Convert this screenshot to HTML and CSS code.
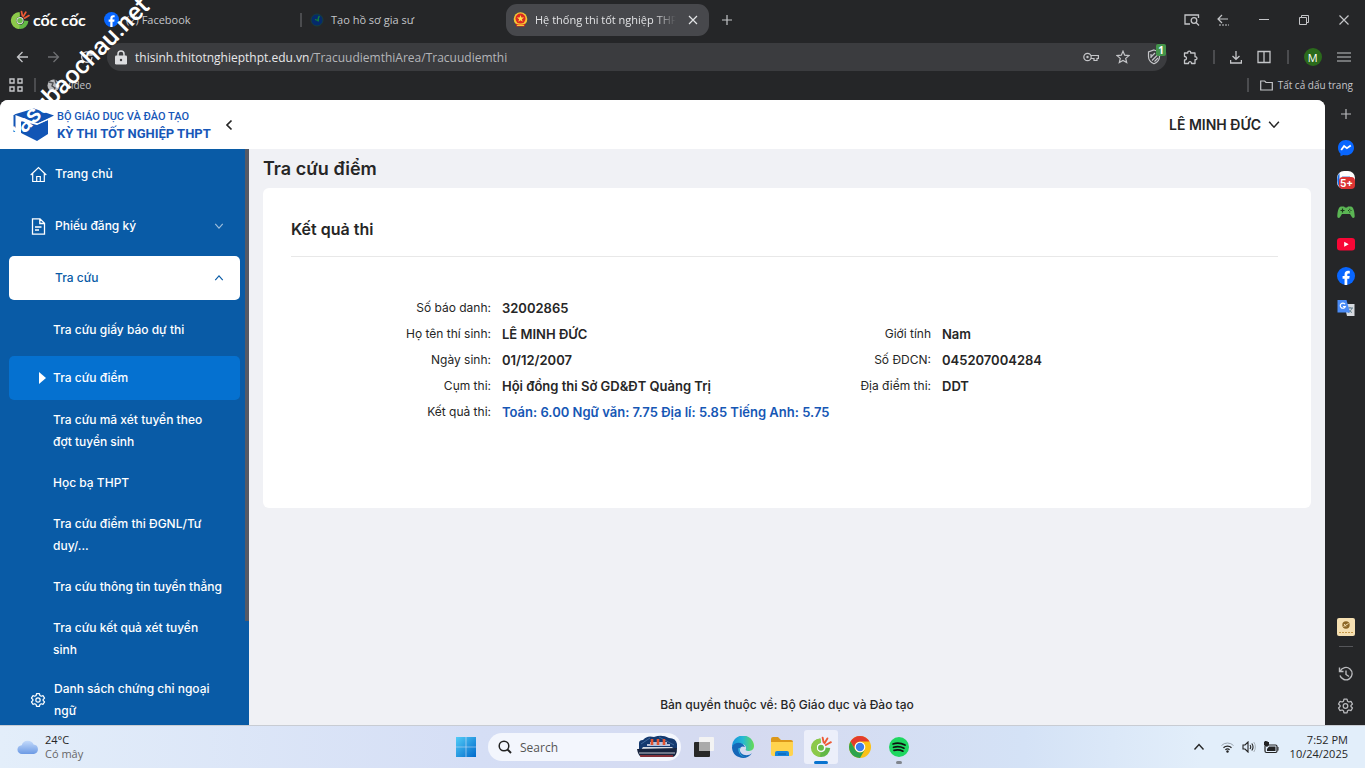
FILE: index.html
```html
<!DOCTYPE html>
<html lang="vi">
<head>
  <meta charset="UTF-8">
  <title>Hệ thống thi tốt nghiệp THPT</title>
  <link rel="stylesheet" href="styles.css">
</head>
<body>

  <!-- shared icons -->
  <svg class="defs" aria-hidden="true">
    <symbol id="fb" viewBox="0 0 20 20">
      <circle cx="10" cy="10" r="10" fill="#0866ff"/>
      <path d="M8.4 20v-7H6.2v-3h2.2V8.4C8.4 5.500 9.900 4.200 12.300 4.200c.9 0 1.500.1 1.900.2v2.700h-1.300c-1.100 0-1.500.6-1.500 1.500V10h2.700l-.5 3h-2.200v7z" fill="#fff"/>
    </symbol>
    <symbol id="coc" viewBox="0 0 20 20">
      <path d="M9.500 2.200A8.400 8.400 0 1 0 18.400 11l-4.200-.6a4.200 4.200 0 1 1-4.400-4z" fill="#62b846"/>
      <path d="M9.500 2.200A8.400 8.400 0 0 0 9 19l.8-4.300A4.200 4.200 0 0 1 9.800 6.400z" fill="#8cc94a"/>
      <circle cx="10" cy="10.600" r="3.600" fill="#fff" fill-opacity=".85"/>
      <circle cx="10" cy="10.600" r="2.700" fill="#6abb48"/>
      <path d="M11.500 1.500l.8 4M15.800 2.200l-2.600 4.400M19 5.600l-4.600 2.600" stroke="#ee5a35" stroke-width="1.700" stroke-linecap="round"/>
    </symbol>
    <symbol id="gear" viewBox="0 0 20 20">
      <path d="M8.200 2h3.600l.6 2.400 1.600.9 2.400-.7 1.800 3.100-1.800 1.700v1.200l1.800 1.700-1.800 3.100-2.400-.7-1.600.9-.6 2.400H8.200l-.6-2.400-1.600-.9-2.400.7-1.800-3.100 1.800-1.700V9.400L1.800 7.700l1.800-3.100 2.400.7 1.600-.9z" fill="none" stroke="currentColor" stroke-width="1.500" stroke-linejoin="round"/>
      <circle cx="10" cy="10" r="2.700" fill="none" stroke="currentColor" stroke-width="1.500"/>
    </symbol>
    <symbol id="down" viewBox="0 0 12 12">
      <path d="M1.500 3.500L6 8.500l4.500-5" fill="none" stroke="currentColor" stroke-width="1.400"/>
    </symbol>
    <symbol id="plus" viewBox="0 0 12 12">
      <path d="M6 1v10M1 6h10" stroke="currentColor" stroke-width="1.200"/>
    </symbol>
  </svg>

  <header class="browser">
    <div class="tabs">
      <div class="brand">
        <svg width="20" height="20"><use href="#coc"/></svg>
        <span>cốc cốc</span>
      </div>
      <a class="tab" href="#">
        <svg width="15" height="15"><use href="#fb"/></svg>
        <span>(2) Facebook</span>
      </a>
      <i class="sep"></i>
      <a class="tab" href="#">
        <svg width="14" height="14" viewBox="0 0 14 14"><circle cx="7" cy="7" r="6" fill="#052a6b" stroke="#173f3b"/><path d="M9.500 3C7.800 4.500 8 6 8.300 8.500M5 6.500l3 1" stroke="#15803c" stroke-width="1.300" fill="none"/></svg>
        <span>Tạo hồ sơ gia sư</span>
      </a>
      <a class="tab active" href="#">
        <svg width="15" height="15" viewBox="0 0 15 15"><circle cx="7.500" cy="7" r="6.800" fill="#f6c733"/><circle cx="7.500" cy="6.600" r="5" fill="#dc2922"/><path d="M7.500 3l.9 2.600h2.700L8.900 7.200l.8 2.600-2.200-1.600-2.200 1.600.8-2.600-2.200-1.600h2.700z" fill="#ffe046"/><path d="M2.500 11.500q5 2.500 10 0l-1 3h-8z" fill="#dc2922"/><path d="M4 13.500h7" stroke="#f6c733"/></svg>
        <span class="fade">Hệ thống thi tốt nghiệp THPT</span>
        <svg class="close" width="10" height="10" viewBox="0 0 10 10"><path d="M1 1l8 8M9 1L1 9" stroke="currentColor" stroke-width="1.200"/></svg>
      </a>
      <button class="icon newtab" aria-label="Tab mới"><svg width="12" height="12"><use href="#plus"/></svg></button>
      <div class="window">
        <button class="icon" aria-label="Tìm tab"><svg width="16" height="14" viewBox="0 0 16 14"><path d="M6 11H1V2h13.500v3" fill="none" stroke="currentColor" stroke-width="1.300"/><circle cx="10" cy="7.500" r="2.800" fill="none" stroke="currentColor" stroke-width="1.300"/><path d="M12 9.500l3 3" stroke="currentColor" stroke-width="1.300"/></svg></button>
        <button class="icon" aria-label="Quay lại"><svg width="14" height="14" viewBox="0 0 14 14"><path d="M12 6H2M6 2L2 6l4 4" fill="none" stroke="currentColor" stroke-width="1.200"/><path d="M3 12h10" stroke="currentColor" stroke-dasharray="2 1"/></svg></button>
        <button class="icon" aria-label="Thu nhỏ"><svg width="12" height="12" viewBox="0 0 12 12"><path d="M1 5.500h10" stroke="currentColor"/></svg></button>
        <button class="icon" aria-label="Khôi phục"><svg width="12" height="12" viewBox="0 0 12 12"><path d="M1.500 3.500h7v7h-7zM3.500 3V1.500h7v7H9" fill="none" stroke="currentColor"/></svg></button>
        <button class="icon" aria-label="Đóng"><svg width="12" height="12" viewBox="0 0 12 12"><path d="M1.500 1.500l9 9M10.500 1.500l-9 9" stroke="currentColor" stroke-width="1.200"/></svg></button>
      </div>
    </div>

    <div class="toolbar">
      <div class="nav">
        <button class="icon" aria-label="Trở về"><svg width="12" height="12" viewBox="0 0 12 12"><path d="M12 6H1.500M6.500 1l-5 5 5 5" fill="none" stroke="currentColor" stroke-width="1.300"/></svg></button>
        <button class="icon dim" aria-label="Tiến"><svg width="12" height="12" viewBox="0 0 12 12"><path d="M0 6h10.500M5.500 1l5 5-5 5" fill="none" stroke="currentColor" stroke-width="1.300"/></svg></button>
        <button class="icon" aria-label="Tải lại"><svg width="14" height="14" viewBox="0 0 14 14"><path d="M12 7a5.200 5.200 0 1 1-1.600-3.700L12 5M12 1v4H8" fill="none" stroke="currentColor" stroke-width="1.300"/></svg></button>
      </div>
      <div class="address">
        <svg width="12" height="15" viewBox="0 0 12 15"><path d="M3 6V4a3 3 0 0 1 6 0v2" fill="none" stroke="#dcdde0" stroke-width="1.500"/><rect y="5.500" width="12" height="9" rx="1.200" fill="#dcdde0"/><circle cx="6" cy="10" r="1.200" fill="#3b3c3f"/></svg>
        <span class="url"><b>thisinh.thitotnghiepthpt.edu.vn</b>/TracuudiemthiArea/Tracuudiemthi</span>
        <button class="icon" aria-label="Mật khẩu"><svg width="16" height="10" viewBox="0 0 16 10"><circle cx="4.500" cy="5" r="3.700" fill="none" stroke="currentColor" stroke-width="1.200"/><circle cx="4.500" cy="5" r="1.200" fill="currentColor"/><path d="M8 3.500h7.400v3H14v2h-3v-2H8" fill="none" stroke="currentColor" stroke-width="1.200"/></svg></button>
        <button class="icon" aria-label="Dấu trang"><svg width="14" height="14" viewBox="0 0 14 14"><path d="M7 1.200l1.700 4 4.300.4-3.300 2.800 1 4.200L7 10.400l-3.700 2.200 1-4.200L1 5.600l4.300-.4z" fill="none" stroke="currentColor" stroke-width="1.200"/></svg></button>
        <button class="icon shield" aria-label="Chặn quảng cáo"><svg width="14" height="16" viewBox="0 0 14 16"><path d="M7 1l5.500 2v4.500c0 3.500-2.500 6-5.500 7.300-3-1.300-5.500-3.800-5.500-7.300V3z" fill="none" stroke="currentColor" stroke-width="1.200"/><path d="M4 8l4-4M5 11.500l6-6M7.500 12.500l3.500-3.500M4 5v4" stroke="currentColor" stroke-width="1.200"/></svg><span class="count">1</span></button>
      </div>
      <div class="tools">
        <button class="icon" aria-label="Tiện ích"><svg width="15" height="15" viewBox="0 0 15 15"><path d="M1.500 3h3.300c-.5-2.600 3.400-2.600 2.900 0H12v3.800c2.600-.5 2.600 3.400 0 2.900V13.500H8.500c.2-2.400-3.200-2.400-3 0h-4V10c2.600.2 2.600-3.700 0-3.500z" fill="none" stroke="currentColor" stroke-width="1.300" stroke-linejoin="round"/></svg></button>
        <i class="sep"></i>
        <button class="icon" aria-label="Tải xuống"><svg width="12" height="13" viewBox="0 0 12 13"><path d="M6 0v8M2.500 5L6 8.300 9.500 5M.6 9v3h10.800V9" fill="none" stroke="currentColor" stroke-width="1.300"/></svg></button>
        <button class="icon" aria-label="Chia đôi màn hình"><svg width="14" height="14" viewBox="0 0 14 14"><path d="M1 1.500h12v11H1zM7 1.500v11" fill="none" stroke="currentColor" stroke-width="1.300"/></svg></button>
        <i class="sep"></i>
        <button class="avatar">M</button>
        <button class="icon" aria-label="Menu"><svg width="14" height="12" viewBox="0 0 14 12"><path d="M0 2h14M0 6h14M0 10h14" stroke="currentColor" stroke-width="1.200"/></svg></button>
      </div>
    </div>

    <div class="bookmarks">
      <svg width="14" height="14" viewBox="0 0 14 14"><path d="M1 1h4v4H1zM9 1h4v4H9zM1 9h4v4H1zM9 9h4v4H9z" fill="none" stroke="currentColor" stroke-width="1.400"/></svg>
      <i class="sep"></i>
      <a href="#">
        <svg width="13" height="13" viewBox="0 0 13 13"><circle cx="6.500" cy="6.500" r="6" fill="#b8b9bc"/><path d="M2 3l4 1-1 3 3 2-2 3.500M8 1l1 3 3 1" stroke="#4b4c50" stroke-width="1.400" fill="none"/></svg>
        Video
      </a>
      <i class="sep last"></i>
      <a href="#">
        <svg width="13" height="11" viewBox="0 0 13 11"><path d="M.7 1h4l1.300 1.500h6.300V10H.7z" fill="none" stroke="currentColor" stroke-width="1.200"/></svg>
        Tất cả dấu trang
      </a>
    </div>
  </header>

  <div class="content">
    <div class="site">
      <header class="top">
        <a class="logo" href="#">
          <svg width="42" height="34" viewBox="0 0 42 34"><path d="M2 6.500L22 .5l20 7-16 8z" fill="#1255b5"/><path d="M9 13l16 4 11-5v14l-11 7-16-8z" fill="#1255b5"/><path d="M2.500 7v17" stroke="#1255b5" stroke-width="2"/><path d="M8 11l17 5 12-5" stroke="#fff" fill="none"/></svg>
          <span><em>BỘ GIÁO DỤC VÀ ĐÀO TẠO</em><strong>KỲ THI TỐT NGHIỆP THPT</strong></span>
        </a>
        <button class="collapse" aria-label="Thu gọn"><svg width="8" height="12" viewBox="0 0 8 12"><path d="M6.500 1.500L2 6l4.500 4.500" fill="none" stroke="currentColor" stroke-width="1.700"/></svg></button>
        <button class="user">LÊ MINH ĐỨC <svg width="14" height="13"><use href="#down"/></svg></button>
      </header>

      <div class="layout">
        <nav class="sidebar">
          <a class="item" href="#">
            <svg width="17" height="17" viewBox="0 0 17 17"><path d="M.7 9l7.800-7.500L16.300 9M2.700 7.500v8h11.600v-8M6.700 15.500v-5h3.600v5" fill="none" stroke="currentColor" stroke-width="1.200"/></svg>
            Trang chủ
          </a>
          <a class="item" href="#">
            <svg width="17" height="17" viewBox="0 0 17 17"><path d="M2.500.8h7.500l4.500 4.500v10.900h-12zM9.800.8v4.700h4.700M5 9h6.500M5 12h4" fill="none" stroke="currentColor" stroke-width="1.300"/></svg>
            Phiếu đăng ký
            <svg class="arrow" width="10" height="10"><use href="#down"/></svg>
          </a>
          <a class="item open" href="#">
            Tra cứu
            <svg class="arrow up" width="10" height="10"><use href="#down"/></svg>
          </a>
          <a class="sub first" href="#">Tra cứu giấy báo dự thi</a>
          <a class="sub current" href="#">Tra cứu điểm</a>
          <a class="sub" href="#">Tra cứu mã xét tuyển theo đợt tuyển sinh</a>
          <a class="sub" href="#">Học bạ THPT</a>
          <a class="sub" href="#">Tra cứu điểm thi ĐGNL/Tư duy/...</a>
          <a class="sub" href="#">Tra cứu thông tin tuyển thẳng</a>
          <a class="sub" href="#">Tra cứu kết quả xét tuyển sinh</a>
          <a class="item certs" href="#">
            <svg width="16" height="16"><use href="#gear"/></svg>
            <span>Danh sách chứng chỉ ngoại ngữ</span>
          </a>
          <div class="scrollbar"></div>
        </nav>

        <main>
          <h1>Tra cứu điểm</h1>
          <section class="card">
            <h2>Kết quả thi</h2>
            <dl class="info">
              <dt>Số báo danh:</dt><dd class="wide">32002865</dd>
              <dt>Họ tên thí sinh:</dt><dd>LÊ MINH ĐỨC</dd>
              <dt>Giới tính</dt><dd>Nam</dd>
              <dt>Ngày sinh:</dt><dd>01/12/2007</dd>
              <dt>Số ĐDCN:</dt><dd>045207004284</dd>
              <dt>Cụm thi:</dt><dd>Hội đồng thi Sở GD&amp;ĐT Quảng Trị</dd>
              <dt>Địa điểm thi:</dt><dd>DDT</dd>
              <dt>Kết quả thi:</dt><dd class="wide score">Toán: 6.00 Ngữ văn: 7.75 Địa lí: 5.85 Tiếng Anh: 5.75</dd>
            </dl>
          </section>
          <footer>Bản quyền thuộc về: Bộ Giáo dục và Đào tạo</footer>
        </main>
      </div>
    </div>

    <aside class="rail">
      <svg class="add" width="12" height="18"><use href="#plus"/></svg>
      <svg width="18" height="18" viewBox="0 0 18 18"><path d="M9 1c4.700 0 8 3.400 8 7.700s-3.300 7.600-8 7.600c-.9 0-1.700-.1-2.500-.3L3.500 17.200l-.1-2.600C1.900 13.200 1 11.100 1 8.700 1 4.400 4.300 1 9 1z" fill="#0866ff"/><path d="M4.200 11l2.900-4 2.800 2.200L13.800 6.500" stroke="#fff" stroke-width="1.800" fill="none"/></svg>
      <span class="chat">
        <svg width="18" height="18" viewBox="0 0 18 18"><rect width="18" height="18" rx="7" fill="#fff"/><path d="M2.500 2C-.5 6-.5 12 2.500 16z" fill="#176be8"/><path d="M5 5.500h8" stroke="#a8c4ef"/></svg>
        <span class="new">5+</span>
      </span>
      <svg width="18" height="18" viewBox="0 0 18 18"><path d="M4 3.500h3l1 1h2l1-1h3c2 0 3.500 4 3.700 9.500 0 2.500-2 2.500-3 .8L13 11H5l-1.700 2.800c-1 1.700-3 1.700-3-.8C.500 7.500 2 3.500 4 3.500z" fill="#5bb554"/><path d="M3.500 7.500h4M5.500 5.500v4M11 7.500h1M13.500 7.500h1M12.700 5.700v1M12.700 8.500v1" stroke="#1d3a1c" stroke-width="1.200"/></svg>
      <svg width="18" height="18" viewBox="0 0 18 18"><rect y="3" width="18" height="12.500" rx="3" fill="#f80736"/><path d="M7.200 6.800l4.500 2.500-4.500 2.500z" fill="#fff"/></svg>
      <svg width="18" height="18"><use href="#fb"/></svg>
      <svg width="18" height="18" viewBox="0 0 18 18"><path d="M7 5h10.500v12H10z" fill="#d7dadf"/><path d="M10 9h6M13 8v1M15 9c-.5 2-2 3.500-4 4.500M11.500 10.500c1 1.500 2 2.300 3.500 3" stroke="#607d8b" fill="none"/><path d="M.5 1h9l3.500 12.500H.5z" fill="#4b8bf5"/><path d="M8 5.200A2.600 2.600 0 1 0 8.300 7.500H6" stroke="#fff" stroke-width="1.200" fill="none"/></svg>
      <svg class="shop" width="18" height="18" viewBox="0 0 18 18"><rect width="18" height="18" rx="2" fill="#f5dfb2"/><circle cx="9" cy="7" r="3.700" fill="#8c6626"/><path d="M6.500 8.500l5-3M7 6l2 2.500" stroke="#f5dfb2"/><path d="M2 14.500h14" stroke="#c69a4c" stroke-dasharray="2 1"/></svg>
      <i class="line"></i>
      <svg width="16" height="18" viewBox="0 0 16 16"><path d="M2.300 5A6.200 6.200 0 1 1 2 9.500M1.500 1.500V5.500h4M8 4.500V8.500l3 2" fill="none" stroke="currentColor" stroke-width="1.400"/></svg>
      <svg width="17" height="18"><use href="#gear"/></svg>
    </aside>
  </div>

  <footer class="taskbar">
    <div class="weather">
      <svg width="22" height="16" viewBox="0 0 22 16"><defs><linearGradient id="sky" x2="0" y2="1"><stop stop-color="#c3dafb"/><stop offset="1" stop-color="#6c9ae4"/></linearGradient></defs><path d="M5 15a4.400 4.400 0 0 1-.3-8.800A6.400 6.400 0 0 1 16.600 5.500 4.800 4.800 0 0 1 17 15z" fill="url(#sky)"/></svg>
      <div>24°C<small>Có mây</small></div>
    </div>
    <div class="apps">
      <button class="app" aria-label="Start"><svg width="22" height="22" viewBox="0 0 22 22"><defs><linearGradient id="win" x2="1" y2="1"><stop stop-color="#52ccf7"/><stop offset="1" stop-color="#0069cb"/></linearGradient></defs><path d="M1 1h9.700v9.700H1zM11.300 1H21v9.700h-9.700zM1 11.300h9.700V21H1zM11.300 11.300H21V21h-9.700z" fill="url(#win)"/></svg></button>
      <label class="search">
        <svg width="14" height="14" viewBox="0 0 14 14"><circle cx="6" cy="6" r="4.800" fill="none" stroke="#222" stroke-width="1.500"/><path d="M9.500 9.500L13 13" stroke="#222" stroke-width="1.900"/></svg>
        <input type="text" placeholder="Search" aria-label="Search">
        <svg width="42" height="24" viewBox="0 0 42 24"><path d="M2 14V8q0-3 4-3 4-5 11-3 8-3 15 1 7 0 8 6v5z" fill="#14396f"/><path d="M4 9l9-6M22 2l15 8" stroke="#5b86b7" stroke-width=".6"/><path d="M6 12h29l3 3H4z" fill="#d6dbe3"/><path d="M10 10h23M13 8h17" stroke="#eef" stroke-width="1.300"/><path d="M15 4v6M21 4v6M27 4v6" stroke="#e45430" stroke-width="2.600"/><path d="M0 14l40-1q0 8-4 9H4q-3-2-4-8z" fill="#17243f"/><path d="M2 18h36" stroke="#f1f3f7" stroke-width=".8"/><path d="M3 21h33" stroke="#a83337" stroke-width="1.500"/></svg>
      </label>
      <button class="app" aria-label="Task view"><svg width="22" height="22" viewBox="0 0 22 22"><rect x="1" y="6" width="16" height="15" rx="1" fill="#272727"/><rect x="6" y="1" width="15" height="14" rx="1" fill="#f3f3f3"/><path d="M6 6h11v9H6z" fill="#aaa"/></svg></button>
      <button class="app" aria-label="Edge"><svg width="22" height="22" viewBox="0 0 22 22"><defs><linearGradient id="edge" x2="1"><stop stop-color="#1691dc"/><stop offset=".5" stop-color="#26b9d3"/><stop offset="1" stop-color="#66db50"/></linearGradient></defs><path d="M0 11A11 11 0 0 1 22 10c0 4-3 5-6 5-2 0-3-1-2-2 1-6-9-7-14-2z" fill="url(#edge)"/><path d="M0 11c3-6 11-5 13 0-4-2-7 2-4 6 3 3 8 3 11 0-3 5-9 6-13 4-4-1-7-5-7-10z" fill="#1467b8"/><path d="M6.500 12c-1 4 2 9 7 9-5-1-7-5-5-9z" fill="#39b7dc"/></svg></button>
      <button class="app" aria-label="File Explorer"><svg width="22" height="22" viewBox="0 0 22 22"><path d="M0 3q0-2 2-2h5l3 3h10q2 0 2 2v3H0z" fill="#dc9819"/><path d="M0 6h22v12q0 2-2 2H2q-2 0-2-2z" fill="#ffd34d"/><path d="M4 20v-3q0-2 2-2h10q2 0 2 2v3z" fill="#1685dc"/><path d="M7 18h8" stroke="#0b58a6"/></svg></button>
      <button class="app on" aria-label="Cốc Cốc"><svg width="22" height="22"><use href="#coc"/></svg></button>
      <button class="app" aria-label="Chrome"><svg width="22" height="22" viewBox="0 0 22 22"><circle cx="11" cy="11" r="11" fill="#fbc116"/><path d="M1.500 5.500A11 11 0 0 1 20.500 5.500H11a5.500 5.500 0 0 0-4.800 8.200z" fill="#e33b2e"/><path d="M1.500 5.500A11 11 0 0 0 11 22l4.800-8.300a5.500 5.500 0 0 1-9.600 0z" fill="#2da44e"/><circle cx="11" cy="11" r="5.300" fill="#fff"/><circle cx="11" cy="11" r="4.200" fill="#3b7ded"/></svg></button>
      <button class="app run" aria-label="Spotify"><svg width="20" height="20" viewBox="0 0 20 20"><circle cx="10" cy="10" r="10" fill="#1ed760"/><path d="M4 7q6-2 12 1M4.500 10.300q5.500-1.600 10.500.9M5 13.300q5-1.200 9 .9" fill="none" stroke="#111" stroke-width="1.700" stroke-linecap="round"/></svg></button>
    </div>
    <div class="tray">
      <svg class="chevron" width="12" height="12"><use href="#down"/></svg>
      <svg width="13" height="12" viewBox="0 0 13 12"><path d="M.5 4.500a8.500 8.500 0 0 1 12 0" fill="none" stroke="#9aa4ae"/><path d="M2.500 6.700a5.700 5.700 0 0 1 8 0M4.400 8.800a3 3 0 0 1 4.200 0" fill="none" stroke="#222" stroke-width="1.200"/><circle cx="6.500" cy="10.500" r="1.200" fill="#222"/></svg>
      <svg width="14" height="12" viewBox="0 0 14 12"><path d="M1 4h2l3-3v10L3 8H1zM8 4q1.500 2 0 4M9.800 2.500q2.500 3.500 0 7" fill="none" stroke="#222" stroke-width="1.100"/><path d="M11.800 1q3.200 5 0 10" fill="none" stroke="#aab3bb"/></svg>
      <svg width="15" height="13" viewBox="0 0 15 13"><rect x="1" y="4" width="12" height="7.500" rx="1.500" fill="none" stroke="#222" stroke-width="1.200"/><path d="M5 5.500h6.500V10H3V8zM13.500 6h1v3.500h-1zM0 1h2V0M3 0l1 1h1v3L3 6 0 4V1z" fill="#222"/></svg>
      <div class="clock">7:52 PM<br>10/24/2025</div>
    </div>
  </footer>

  <div class="watermark">giasubaochau.net</div>

</body>
</html>
```
FILE: styles.css
```css
* {
  box-sizing: border-box;
}

body {
  margin: 0;
  height: 100vh;
  display: flex;
  flex-direction: column;
  overflow: hidden;
  position: relative;
  background: #252628;
  font-family: Inter, sans-serif;
  font-size: 12px;
  color: #262626;
}

a {
  color: inherit;
  text-decoration: none;
}

button {
  border: none;
  background: none;
  padding: 0;
  color: inherit;
  font: inherit;
}

svg {
  flex: none;
  display: block;
}

.defs {
  position: absolute;
  width: 0;
  height: 0;
}

/* browser */

.browser {
  color: #c4c5c8;
  font-family: "Open Sans", sans-serif;
  font-size: 11px;
}

.tabs {
  height: 39px;
  display: flex;
  align-items: center;
}

.brand {
  width: 96px;
  padding-left: 10px;
  display: flex;
  align-items: center;
  gap: 3px;
  color: #fff;
  font-family: Lato, sans-serif;
  font-size: 16px;
  font-weight: bold;
}

.tab {
  width: 204px;
  height: 32px;
  padding: 0 8px;
  display: flex;
  align-items: center;
  gap: 7px;
  white-space: nowrap;
}

.tab.active {
  width: 203px;
  padding: 0 11px 0 7px;
  background: #47484c;
  border-radius: 11px;
  color: #e3e4e6;
}

.fade {
  flex: 1;
  overflow: hidden;
  mask-image: linear-gradient(to right, #000 85%, transparent);
}

.tab .close {
  margin-left: 5px;
}

.sep {
  width: 2px;
  height: 14px;
  background: #4b4c4f;
}

.icon {
  display: flex;
  justify-content: center;
  align-items: center;
}

.newtab {
  margin-left: 12px;
}

.window {
  margin-left: auto;
  padding-right: 15px;
  display: flex;
  align-items: center;
  gap: 28px;
}

.window .icon:nth-child(2) {
  margin-left: -12px;
}

.toolbar {
  height: 36px;
  display: flex;
  align-items: center;
}

.nav {
  width: 107px;
  padding-left: 16px;
  display: flex;
  gap: 20px;
}

.dim {
  color: #6e6f72;
}

.address {
  flex: 1;
  height: 28px;
  padding: 0 6px 0 8px;
  display: flex;
  align-items: center;
  gap: 8px;
  background: #3b3c3f;
  border-radius: 14px;
}

.url {
  flex: 1;
  font-size: 12px;
  color: #b4b5b9;
}

.url b {
  font-weight: normal;
  color: #e8e8ea;
}

.address .icon {
  margin-left: 9px;
}

.shield {
  position: relative;
}

.count {
  position: absolute;
  left: 9px;
  top: -5px;
  width: 10px;
  height: 12px;
  border-radius: 2px;
  background: #43944a;
  color: #fff;
  font-size: 10px;
  line-height: 12px;
  font-weight: bold;
}

.tools {
  width: 198px;
  padding: 0 14px 0 16px;
  display: flex;
  align-items: center;
  justify-content: space-between;
}

.avatar {
  width: 18px;
  height: 18px;
  border-radius: 50%;
  background: #2b6a1c;
  color: #fff;
}

.bookmarks {
  height: 25px;
  padding: 0 12px 5px 9px;
  display: flex;
  align-items: center;
  gap: 11px;
  font-size: 10px;
}

.bookmarks a {
  display: flex;
  align-items: center;
  gap: 5px;
}

.last {
  margin-left: auto;
}

/* site */

.content {
  flex: 1;
  min-height: 0;
  display: flex;
}

.site {
  flex: 1;
  display: flex;
  flex-direction: column;
  overflow: hidden;
  background: #f0f1f5;
  border-radius: 8px 8px 0 0;
}

.top {
  height: 49px;
  padding: 0 44px 0 12px;
  display: flex;
  align-items: center;
  background: #fff;
}

.logo {
  display: flex;
  align-items: center;
  gap: 3px;
  font-family: Roboto, sans-serif;
  line-height: 17px;
  color: #1757b8;
  white-space: nowrap;
}

.logo em {
  display: block;
  font-size: 11px;
  font-style: normal;
  font-weight: 500;
}

.logo strong {
  display: block;
  font-size: 13px;
}

.collapse {
  margin-left: 14px;
}

.user {
  margin-left: auto;
  display: flex;
  align-items: center;
  gap: 6px;
  font-size: 14px;
  font-weight: 600;
}

.layout {
  flex: 1;
  min-height: 0;
  display: flex;
}

.sidebar {
  position: relative;
  z-index: 1;
  width: 249px;
  flex: none;
  padding: 3px 9px;
  overflow: hidden;
  background: #095ba6;
  color: #fff;
  font-weight: 500;
  line-height: 22px;
}

.item {
  height: 44px;
  margin-bottom: 8px;
  padding: 0 16px 0 21px;
  display: flex;
  align-items: center;
  gap: 8px;
}

.arrow {
  margin-left: auto;
  opacity: 0.6;
}

.arrow.up {
  transform: rotate(180deg);
  opacity: 1;
}

.item.open {
  padding-left: 46px;
  background: #fff;
  border-radius: 5px;
  color: #095ba6;
}

.sub {
  display: block;
  padding: 9px 17px 10px 44px;
}

.sub.first {
  padding: 11px 17px 15px 44px;
}

.sub.current {
  height: 44px;
  padding: 0 30px;
  display: flex;
  align-items: center;
  gap: 7px;
  background: #0571d0;
  border-radius: 5px;
}

.sub.current::before {
  content: "";
  border: 6px solid transparent;
  border-left: 7px solid #fff;
  border-right: none;
}

.certs {
  margin-top: 7px;
}

.scrollbar {
  position: absolute;
  top: 0;
  right: 0;
  width: 4px;
  height: 82%;
  background: #555a66;
}

main {
  flex: 1;
  padding: 8px 14px 9px;
  display: flex;
  flex-direction: column;
}

h1 {
  margin: 0 0 7px;
  font-size: 18px;
  line-height: 24px;
  font-weight: 600;
}

.card {
  padding: 28px 33px 83px 28px;
  background: #fff;
  border-radius: 6px;
}

h2 {
  margin: 0 0 38px;
  padding-bottom: 13px;
  border-bottom: 1px solid #e8e8e8;
  font-size: 16px;
  line-height: 27px;
  font-weight: 600;
}

.info {
  margin: 0;
  display: grid;
  grid-template-columns: 200fr 218fr 200fr 336fr;
  column-gap: 11px;
  line-height: 26px;
  white-space: nowrap;
}

.info dt {
  text-align: right;
}

.info dd {
  margin: 0;
  font-size: 13px;
  font-weight: 600;
}

.info .wide {
  grid-column: 2 / 5;
}

.score {
  color: #1657b5;
}

main footer {
  margin-top: auto;
  text-align: center;
  font-weight: 500;
  line-height: 22px;
}

/* right rail */

.rail {
  width: 40px;
  padding: 5px 0 10px 1px;
  display: flex;
  flex-direction: column;
  align-items: center;
  gap: 14px;
  color: #b9babd;
}

.add {
  margin-bottom: 2px;
}

.chat {
  position: relative;
}

.new {
  position: absolute;
  left: 2px;
  top: 6px;
  width: 16px;
  height: 12px;
  border-radius: 4px;
  background: #dc3434;
  color: #fff;
  font-size: 10px;
  line-height: 12px;
  font-weight: bold;
  text-align: center;
}

.shop {
  margin-top: auto;
  margin-bottom: -4px;
}

.line {
  width: 14px;
  height: 1px;
  margin-bottom: 4px;
  background: #55565a;
}

/* taskbar */

.taskbar {
  height: 43px;
  display: flex;
  align-items: center;
  justify-content: space-between;
  border-top: 1px solid #c8ccd3;
  background: linear-gradient(to right, #e3eefa, #d5def5 35%, #d5daf0 55%, #d4e2f6 75%, #e2eefa 88%);
  font-family: "Open Sans", sans-serif;
  font-size: 11px;
  line-height: 14px;
}

.weather {
  flex: 1;
  padding-left: 17px;
  display: flex;
  align-items: center;
  gap: 6px;
}

.weather small {
  display: block;
  font-size: 11px;
  color: #666;
}

.apps {
  display: flex;
  align-items: center;
  gap: 5px;
}

.app {
  position: relative;
  width: 34px;
  height: 34px;
  display: flex;
  align-items: center;
  justify-content: center;
  border-radius: 3px;
}

.app.on {
  background: #eceffa;
}

.app.on::after,
.app.run::after {
  content: "";
  position: absolute;
  bottom: 0;
  width: 14px;
  height: 3px;
  border-radius: 2px;
  background: #0873cf;
}

.app.run::after {
  width: 6px;
  background: #80858d;
}

.search {
  width: 193px;
  height: 28px;
  margin-right: 1px;
  padding: 0 2px 0 10px;
  display: flex;
  align-items: center;
  gap: 8px;
  border-radius: 14px;
  background: #f3f6fd;
}

.search input {
  flex: 1;
  min-width: 0;
  padding: 0;
  border: none;
  background: none;
  font-family: "Open Sans", sans-serif;
  font-size: 12px;
}

.search input::placeholder {
  color: #555;
}

.tray {
  flex: 1;
  padding-right: 17px;
  display: flex;
  align-items: center;
  justify-content: flex-end;
  gap: 8px;
}

.chevron {
  margin-right: 8px;
  transform: rotate(180deg);
}

.clock {
  margin-left: 3px;
  text-align: right;
}

.watermark {
  position: absolute;
  left: 14px;
  top: 125px;
  color: #fff;
  font-family: Roboto, sans-serif;
  font-size: 25px;
  font-weight: 500;
  line-height: 28px;
  transform: rotate(-45deg);
  transform-origin: 0 100%;
  pointer-events: none;
}
```
